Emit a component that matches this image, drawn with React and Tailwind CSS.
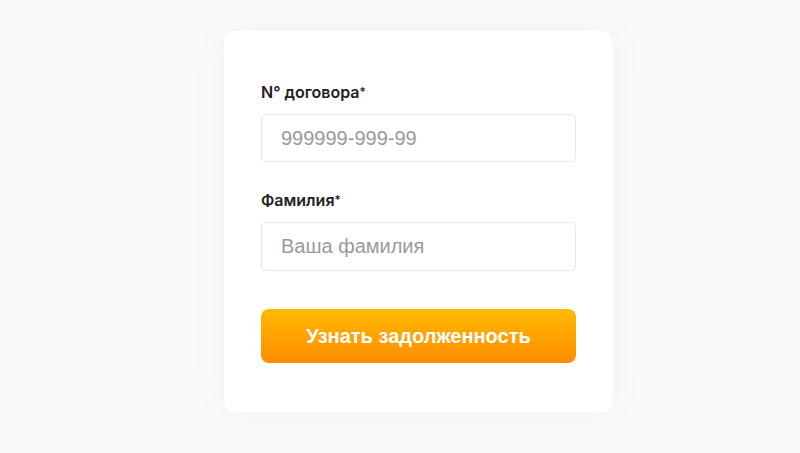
export default function App() {
  return (
    <div className="min-h-[453px] w-full bg-[#fafafa] flex justify-center pt-[31px] pl-[37px]">
      <div
        className="w-[389px] h-[381px] bg-white rounded-[10px] shadow-[0_0_40px_rgba(0,0,0,0.04)] px-[37px] pt-[51px]"
        style={{ fontFamily: 'Inter, "Noto Sans", sans-serif' }}
      >
        <label className="block text-[16px] font-semibold text-[#222] leading-[20px]">
          N° договора<span className="text-[12px] font-medium align-top">*</span>
        </label>
        <input
          placeholder="999999-999-99"
          className="mt-[12px] block w-[315px] h-[48px] rounded-[5px] border border-[#e6e6e6] px-[19px] text-[20px] text-[#333] placeholder-[#9a9a9a] outline-none"
          style={{ fontFamily: '"Liberation Sans", Arial, sans-serif' }}
        />
        <label className="mt-[28px] block text-[16px] font-semibold text-[#222] leading-[20px]">
          Фамилия<span className="text-[12px] font-medium align-top">*</span>
        </label>
        <input
          placeholder="Ваша фамилия"
          className="mt-[12px] block w-[315px] h-[49px] rounded-[5px] border border-[#e6e6e6] px-[19px] text-[20px] text-[#333] placeholder-[#9a9a9a] outline-none"
          style={{ fontFamily: '"Liberation Sans", Arial, sans-serif' }}
        />
        <button
          className="mt-[38px] block w-[315px] h-[54px] rounded-[8px] bg-gradient-to-b from-[#ffba00] to-[#ff8c00] text-white text-[20px] font-bold"
          style={{ fontFamily: '"Liberation Sans", Arial, sans-serif' }}
        >
          Узнать задолженность
        </button>
      </div>
    </div>
  )
}
